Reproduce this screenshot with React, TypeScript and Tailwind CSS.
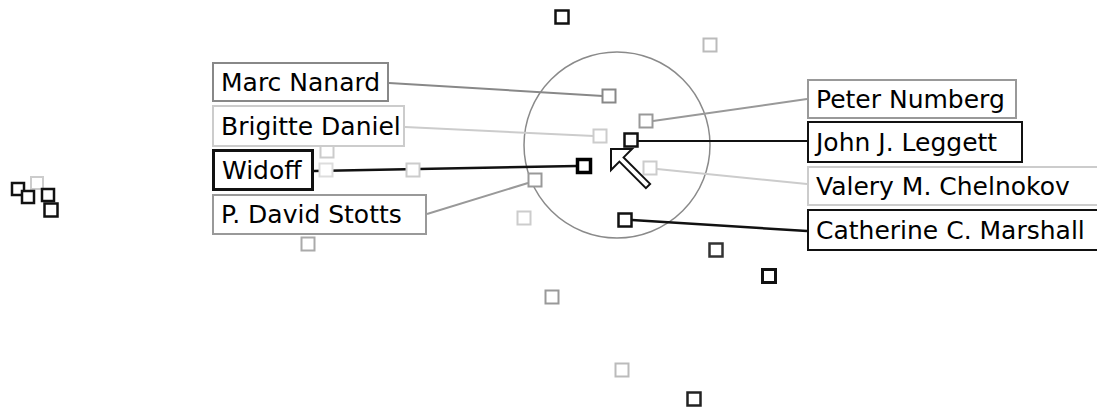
import React from "react";

type Node = { x: number; y: number; c: string; w?: number; s?: number };

const nodes: Node[] = [
  { x: 562, y: 17, c: "#111", w: 2.5 },
  { x: 710, y: 45, c: "#bbb" },
  { x: 609, y: 96, c: "#888" },
  { x: 646, y: 121, c: "#999" },
  { x: 600, y: 136, c: "#ccc" },
  { x: 631, y: 140, c: "#111", w: 2.5 },
  { x: 584, y: 166, c: "#000", w: 3.5 },
  { x: 650, y: 168, c: "#ccc" },
  { x: 535, y: 180, c: "#999" },
  { x: 524, y: 218, c: "#ccc" },
  { x: 625, y: 220, c: "#111", w: 2.5 },
  { x: 716, y: 250, c: "#333", w: 2.5 },
  { x: 769, y: 276, c: "#111", w: 3 },
  { x: 552, y: 297, c: "#999" },
  { x: 622, y: 370, c: "#bbb" },
  { x: 694, y: 399, c: "#222", w: 2.5 },
  { x: 308, y: 244, c: "#aaa" },
  { x: 327, y: 151, c: "#ccc" },
  { x: 326, y: 170, c: "#ddd" },
  { x: 413, y: 170, c: "#ccc" },
  // left cluster
  { x: 37, y: 183, c: "#ccc", s: 12 },
  { x: 18, y: 189, c: "#111", s: 12, w: 2.5 },
  { x: 28, y: 197, c: "#111", s: 12, w: 2.5 },
  { x: 48, y: 195, c: "#111", s: 12, w: 2.5 },
  { x: 51, y: 210, c: "#111", s: 13, w: 2.5 },
];

type Line = { x1: number; y1: number; x2: number; y2: number; c: string; w: number };

const lines: Line[] = [
  { x1: 389, y1: 83, x2: 603, y2: 96, c: "#888", w: 2 },
  { x1: 405, y1: 127, x2: 594, y2: 136, c: "#ccc", w: 2 },
  { x1: 314, y1: 171, x2: 577, y2: 166, c: "#111", w: 2.5 },
  { x1: 427, y1: 214, x2: 528, y2: 183, c: "#999", w: 2 },
  { x1: 653, y1: 121, x2: 807, y2: 99, c: "#999", w: 2 },
  { x1: 638, y1: 141, x2: 807, y2: 141, c: "#111", w: 2 },
  { x1: 657, y1: 169, x2: 807, y2: 184, c: "#ccc", w: 2 },
  { x1: 632, y1: 220, x2: 807, y2: 231, c: "#111", w: 2.5 },
];

const labelBase =
  "absolute flex items-center bg-white pl-[7px] whitespace-nowrap text-black text-[25px] leading-none font-['DejaVu_Sans',sans-serif]";

export default function App() {
  return (
    <div className="relative w-[1097px] h-[408px] bg-white overflow-hidden">
      <svg className="absolute inset-0" width={1097} height={408} viewBox="0 0 1097 408">
        <circle cx={617} cy={145} r={93} fill="none" stroke="#8a8a8a" strokeWidth={1.5} />
        {lines.map((l, i) => (
          <line key={i} x1={l.x1} y1={l.y1} x2={l.x2} y2={l.y2} stroke={l.c} strokeWidth={l.w} />
        ))}
        {nodes.map((n, i) => {
          const s = n.s ?? 13;
          return (
            <rect
              key={i}
              x={n.x - s / 2}
              y={n.y - s / 2}
              width={s}
              height={s}
              fill="white"
              stroke={n.c}
              strokeWidth={n.w ?? 2}
            />
          );
        })}
        <g transform="translate(611 149)">
          <polygon
            points="0,0 21,0 12.6,8.4 39.1,34.9 34.9,39.1 8.4,12.6 0,21"
            fill="white"
            stroke="#111"
            strokeWidth={2}
            strokeLinejoin="miter"
          />
        </g>
      </svg>

      <div className={`${labelBase} left-[212px] top-[62px] w-[177px] h-[40px] border-2 border-[#888]`}>Marc Nanard</div>
      <div className={`${labelBase} left-[212px] top-[105px] w-[193px] h-[42px] border-2 border-[#ccc]`}>Brigitte Daniel</div>
      <div className={`${labelBase} left-[212px] top-[149px] w-[102px] h-[42px] border-[3px] border-[#111]`}>Widoff</div>
      <div className={`${labelBase} left-[212px] top-[194px] w-[215px] h-[41px] border-2 border-[#999]`}>P. David Stotts</div>

      <div className={`${labelBase} left-[807px] top-[79px] w-[210px] h-[40px] border-2 border-[#999]`}>Peter Numberg</div>
      <div className={`${labelBase} left-[807px] top-[121px] w-[216px] h-[42px] border-2 border-[#111]`}>John J. Leggett</div>
      <div className={`${labelBase} left-[807px] top-[166px] w-[294px] h-[40px] border-2 border-[#ccc]`}>Valery M. Chelnokov</div>
      <div className={`${labelBase} left-[807px] top-[209px] w-[294px] h-[42px] border-2 border-[#111]`}>Catherine C. Marshall</div>
    </div>
  );
}
